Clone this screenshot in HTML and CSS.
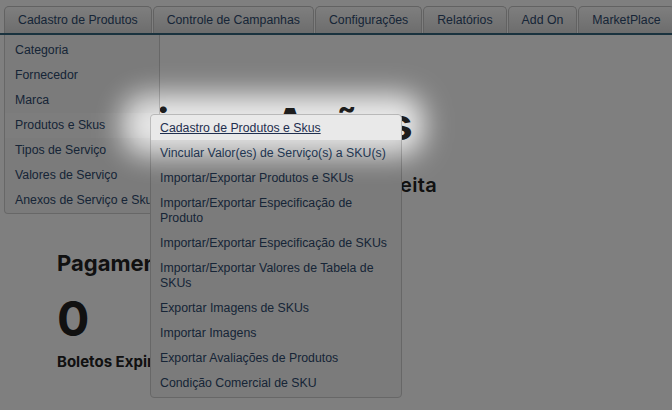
FILE: index.html
```html
<!DOCTYPE html>
<html lang="pt-BR">
<head>
<meta charset="utf-8">
<title>Admin</title>
<link rel="stylesheet" href="styles.css">
</head>
<body>
<nav class="topnav">
  <ul class="tabs">
    <li class="tab tab-open">
      <span class="tab-label">Cadastro de Produtos</span>
      <ul class="menu menu-main">
        <li class="menu-item">Categoria</li>
        <li class="menu-item">Fornecedor</li>
        <li class="menu-item">Marca</li>
        <li class="menu-item menu-item-hover">Produtos e Skus
          <ul class="menu menu-sub">
            <li class="menu-item sub-item tour-target"><span class="link-under">Cadastro de Produtos e Skus</span></li>
            <li class="menu-item sub-item">Vincular Valor(es) de Serviço(s) a SKU(s)</li>
            <li class="menu-item sub-item">Importar/Exportar Produtos e SKUs</li>
            <li class="menu-item sub-item">Importar/Exportar Especificação de Produto</li>
            <li class="menu-item sub-item">Importar/Exportar Especificação de SKUs</li>
            <li class="menu-item sub-item">Importar/Exportar Valores de Tabela de SKUs</li>
            <li class="menu-item sub-item">Exportar Imagens de SKUs</li>
            <li class="menu-item sub-item">Importar Imagens</li>
            <li class="menu-item sub-item">Exportar Avaliações de Produtos</li>
            <li class="menu-item sub-item">Condição Comercial de SKU</li>
          </ul>
        </li>
        <li class="menu-item">Tipos de Serviço</li>
        <li class="menu-item">Valores de Serviço</li>
        <li class="menu-item">Anexos de Serviço e Sku</li>
      </ul>
    </li>
    <li class="tab"><span class="tab-label">Controle de Campanhas</span></li>
    <li class="tab"><span class="tab-label">Configurações</span></li>
    <li class="tab"><span class="tab-label">Relatórios</span></li>
    <li class="tab"><span class="tab-label">Add On</span></li>
    <li class="tab"><span class="tab-label">MarketPlace</span></li>
  </ul>
</nav>

<main class="content">
  <h1 class="page-title">Próximas Ações</h1>
  <h2 class="page-sub">Boletos a vencer e previsão de receita</h2>
  <section class="stat">
    <h3 class="stat-title">Pagamentos</h3>
    <div class="stat-value">0</div>
    <div class="stat-label">Boletos Expirados</div>
  </section>
</main>

<div class="tour-overlay"><div class="tour-hole"></div></div>
</body>
</html>
```
FILE: styles.css
```css
* { box-sizing: border-box; }
html, body { margin: 0; padding: 0; }
body {
  background: #ffffff;
  font-family: "Liberation Sans", Arial, sans-serif;
  font-size: 12.3px;
  color: #2e4a6e;
  width: 672px;
  height: 410px;
  overflow: hidden;
}
ul { list-style: none; margin: 0; padding: 0; }

.topnav {
  padding: 6px 0 0 4px;
  border-bottom: 2px solid #33647c;
}
.tabs {
  display: flex;
  gap: 1px;
}
.tab {
  position: relative;
  height: 27px;
  padding: 0 13px;
  display: flex;
  align-items: center;
  border: 1px solid #c4c4c4;
  border-bottom: none;
  border-radius: 5px 5px 0 0;
  background: linear-gradient(#fdfdfd, #dadada);
  color: #2e4a6e;
  white-space: nowrap;
}
.tab-label { line-height: 15px; }

.menu {
  position: absolute;
  background: #f6f6f6;
  border: 1px solid #cfcfcf;
}
.menu-main {
  left: -1px;
  top: calc(100% + 2px);
  width: 156px;
  padding: 3px 0 0;
  border-top: none;
  border-radius: 0 0 4px 4px;
}
.menu-item {
  height: 25px;
  padding: 5px 10px;
  line-height: 15px;
  white-space: nowrap;
}
.menu-item-hover {
  position: relative;
  background: #fbfbfb;
}

.menu-sub {
  left: 145px;
  top: 1px;
  width: 252px;
  padding: 0 0 2px;
  border-radius: 4px;
  white-space: normal;
}
.sub-item {
  height: auto;
  min-height: 25px;
  padding: 6px 9px 4px;
  white-space: normal;
}
.tour-target {
  position: relative;
  z-index: 1001;
  background: #e9e9e9;
  border-radius: 4px 4px 0 0;
}
.link-under { text-decoration: underline; color: #1f2f4f; }

.content {
  padding: 0 0 0 57px;
  color: #222222;
  font-family: Inter, "Open Sans", sans-serif;
}
.page-title {
  margin: 62px 0 0;
  font-size: 44px;
  line-height: 54px;
  font-weight: 700;
  letter-spacing: 0.8px;
}
.page-sub {
  margin: 22px 0 0;
  font-size: 20px;
  line-height: 24px;
  font-weight: 600;
  letter-spacing: 0.35px;
}
.stat { margin-top: 52px; }
.stat-title {
  margin: 0;
  font-size: 22px;
  line-height: 28px;
  font-weight: 700;
}
.stat-value {
  margin-top: 17px;
  font-size: 48px;
  line-height: 50px;
  font-weight: 700;
}
.stat-label {
  margin-top: 9px;
  font-size: 15px;
  line-height: 18px;
  font-weight: 700;
}

.tour-overlay {
  position: fixed;
  inset: 0;
  z-index: 1000;
  overflow: hidden;
  pointer-events: none;
}
.tour-hole {
  position: absolute;
  left: 122px;
  top: 94px;
  width: 302px;
  height: 62px;
  border-radius: 24px;
  background: rgba(0, 0, 0, 0.08);
  box-shadow: 0 0 0 1400px rgba(0, 0, 0, 0.5);
  filter: blur(14px);
}
```
